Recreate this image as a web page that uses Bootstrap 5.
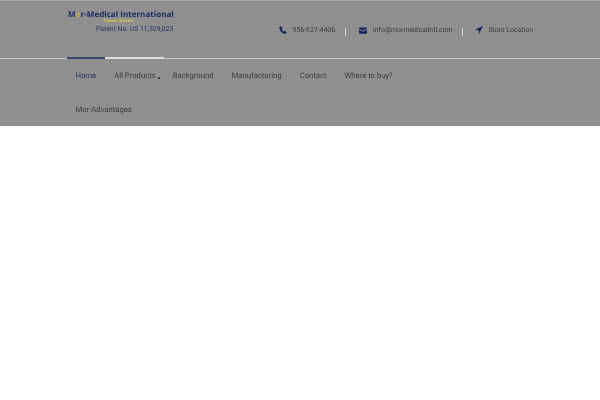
<!DOCTYPE html>
<html lang="en">
<head>
<meta charset="utf-8">
<title>Mor-Medical International</title>
<link href="https://cdn.jsdelivr.net/npm/bootstrap@5.3.0/dist/css/bootstrap.min.css" rel="stylesheet">
<style>
html,body{background:#fff;font-family:Roboto,sans-serif;text-rendering:geometricPrecision}
.site-head{background:conic-gradient(#929292 25%,#8d8d8d 0 50%,#929292 0 75%,#8d8d8d 0) 0 0/2px 2px;height:126px;border-top:1px solid #a6a6a6}
.top-strip{height:58px;border-bottom:1px solid #c4c4c4;padding:0 67px}
.brand-box{width:107px;padding-top:9px;flex:none;filter:blur(.3px)}
.brand-name{font:700 8.05px/10px "Open Sans",sans-serif;color:#1c2a5e;white-space:nowrap;margin-left:1px}
.brand-name span{color:#c9a93a}
.brand-tag{font:700 4.2px/4px "Open Sans",sans-serif;color:#d6c64f;margin:0 0 0 37px;white-space:nowrap}
.patent{font-size:6.85px;line-height:10px;color:#23335f;margin:0 0 0 29px;white-space:nowrap}
.contact-row{margin:21px 0 0 auto;height:16px;filter:blur(.3px)}
.contact-item{font-size:6.9px;line-height:16px;color:#3c3c3c;white-space:nowrap;display:flex;align-items:center}
.contact-item svg{fill:#16265f;margin-right:6px;flex:none}
.contact-item svg.nav-arrow{margin-right:5px}
.contact-sep{width:1px;height:8px;background:#d4d4d4;margin:6px 12px 0 10px;flex:none}
.contact-sep.first-sep{margin-right:13px}
.tab-marks{height:2px;margin:-2px 0 0 67px}
.tab-dark{width:38px;height:2px;background:#3a4464}
.tab-light{width:59px;height:2px;background:#dedede}
.menu-bar{padding:0 66.5px;width:520px;filter:blur(.3px)}
.menu-bar a{font-size:7.7px;line-height:34px;height:34px;color:#3c3c3c;text-decoration:none;padding:0 9px;white-space:nowrap}
.menu-bar a.is-current{color:#1f3560}
.menu-bar a.has-caret{padding-right:4px}
.caret-mark{display:inline-block;width:2px;height:2px;background:#3c3c3c;margin-left:2px;vertical-align:-1px}
</style>
</head>
<body>
<header class="site-head">
  <div class="top-strip d-flex">
    <div class="brand-box">
      <div class="brand-name">M<span>o</span>r-Medical International</div>
      <div class="brand-tag">Patent Matter</div>
      <div class="patent">Patent No: US 11,529,023</div>
    </div>
    <div class="contact-row d-flex">
      <div class="contact-item"><svg width="8" height="8" viewBox="0 0 16 16"><path d="M3.6.7 1 2C.4 3 .5 5 2 8c1.700 3.200 4 5.800 7.500 7.300 1.500.5 2.700.5 3.500 0l2-2.300c.3-.4.200-.8-.2-1.100l-3-2c-.4-.2-.7-.2-1 .1L9.500 11.300C8 10.500 6 8 5.400 6.500l1.300-1.200c.3-.3.300-.6.200-1L5 1c-.3-.4-.9-.6-1.400-.3z"/></svg>956-627-4406</div>
      <div class="contact-sep first-sep"></div>
      <div class="contact-item"><svg width="8" height="7" viewBox="0 0 16 14"><path d="M1.500 1h13c.8 0 1.500.7 1.500 1.500v.6L8 7.500 0 3.100v-.6C0 1.700.7 1 1.500 1zM0 5l8 4.400L16 5v7c0 .8-.7 1.500-1.500 1.500h-13C.7 13.500 0 12.800 0 12z"/></svg>info@mormedicalintl.com</div>
      <div class="contact-sep"></div>
      <div class="contact-item"><svg class="nav-arrow" width="8" height="8" viewBox="0 0 16 16"><path d="M15.800.2 0 7.500l7.200.8.800 7.500z"/></svg>Store Location</div>
    </div>
  </div>
  <div class="tab-marks d-flex"><div class="tab-dark"></div><div class="tab-light"></div></div>
  <nav class="menu-bar d-flex flex-wrap">
    <a href="#" class="is-current">Home</a>
    <a href="#" class="has-caret">All Products<i class="caret-mark"></i></a>
    <a href="#">Background</a>
    <a href="#">Manufacturing</a>
    <a href="#">Contact</a>
    <a href="#">Where to buy?</a>
    <a href="#">Mor-Advantages</a>
  </nav>
</header>
</body>
</html>
